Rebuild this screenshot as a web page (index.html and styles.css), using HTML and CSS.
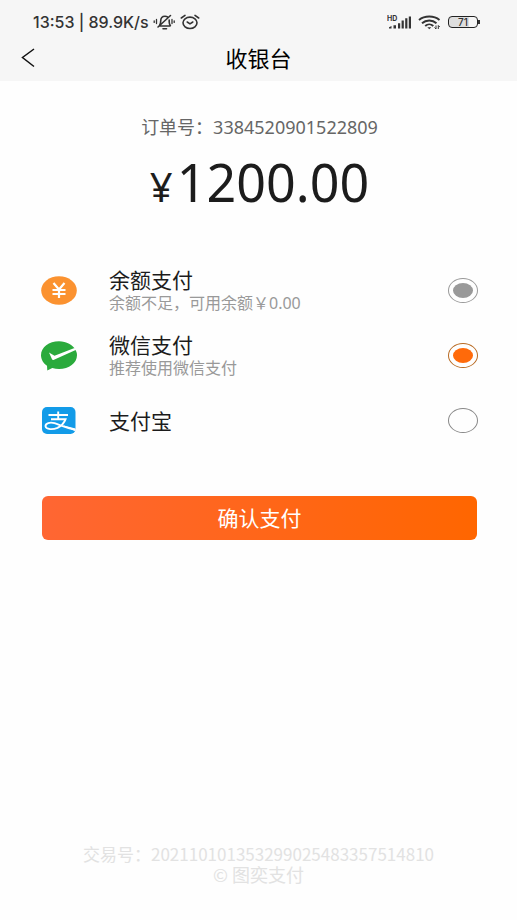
FILE: index.html
```html
<!DOCTYPE html>
<html lang="zh-CN">
<head>
<meta charset="utf-8">
<meta name="viewport" content="width=device-width, initial-scale=1">
<title>收银台</title>
<link rel="stylesheet" href="styles.css">
</head>
<body>
<header class="header">
  <div class="status">
    <span class="status-text">13:53 | 89.9K/s</span>
    <svg class="icon-mute" viewBox="0 0 22 16" width="22" height="16" fill="none" stroke="#333" stroke-width="1.600" stroke-linecap="round">
      <path d="M6 12h11M6.500 11.500c1.200-1.400 1.200-2.500 1.200-4.500C7.700 4 9.500 2.200 12 2.200c1 0 1.800.200 2.500.700M16.200 6v2c0 1.500.400 2.500 1.200 3.700M5 13L17.500 1.500M10 14.700h3.500"/>
      <path d="M3.500 5.500v4M1.200 6.800v1.600M19 5.500v4M21.200 6.800v1.600" stroke-width="1.300"/>
    </svg>
    <svg class="icon-alarm" viewBox="0 0 20 16" width="20" height="16" fill="none" stroke="#333" stroke-width="1.600" stroke-linecap="round">
      <ellipse cx="10" cy="8.800" rx="7" ry="5.700"/>
      <path d="M1.300 4L5 1.400M18.700 4L15 1.400M7.200 8l2.800 1.800L12.800 8"/>
    </svg>
    <svg class="icon-signal" viewBox="0 0 25 15" width="25" height="15">
      <text class="hd" x="0" y="6">HD</text>
      <path d="M2 13.500v-1.300l2.500-1.200v2.500zM6.500 10.300h2.500v3.200H6.500zM11 8.300h2.200v5.200H11zM14.600 5.500h2.200v8h-2.200zM18.200 3.300h2.200v10.200H18.200zM21.800 1.500H24v12h-2.200z" fill="#333"/>
    </svg>
    <svg class="icon-wifi" viewBox="0 0 23 15" width="23" height="15" fill="none" stroke="#333" stroke-width="1.900">
      <path d="M1 5C6.500.300 16 .300 21.500 5M4 8.200c4-3.700 10.500-3.700 14.500 0M7.200 11c2.300-2.200 5.800-2.200 8.100 0"/>
      <path d="M9.300 12.200h4L11.300 14.300z" fill="#333" stroke="none"/>
      <path d="M18 10.500v3.500l-1.500-1.500M20.300 14v-3.500l1.500 1.500" stroke-width="1"/>
    </svg>
    <span class="battery">71</span>
  </div>
  <nav class="nav">
    <a class="back" href="#" aria-label="返回">
      <svg viewBox="0 0 14 20" width="14" height="20" fill="none" stroke="#111" stroke-width="1.500"><path d="M13 1L1.500 9.500 13 18.500"/></svg>
    </a>
    <h1 class="title">收银台</h1>
  </nav>
</header>
<main class="main">
  <p class="order">订单号：3384520901522809</p>
  <p class="amount"><span class="currency">¥</span>1200.00</p>
  <form class="form">
    <label class="method">
      <svg class="logo" viewBox="0 0 36 30" width="36" height="30">
        <ellipse cx="18" cy="14.500" rx="17.800" ry="14.300" fill="#fb9230"/>
        <path d="M12.500 7l5.500 6.500L23.500 7M18 13.500V22M11.500 14h13M11.500 18h13" fill="none" stroke="#fff" stroke-width="2.200"/>
      </svg>
      <span class="info"><span class="name">余额支付</span><span class="note">余额不足，可用余额￥0.00</span></span>
      <input class="radio" type="radio" name="balance" disabled checked>
    </label>
    <label class="method">
      <svg class="logo" viewBox="0 0 36 30" width="36" height="30">
        <path d="M34.500 9C32 3.800 25.500.300 18 .300 8 .300 0 6.300 0 14.200c0 4.300 2.400 8 6 10.500L6.300 29.500l5-2.600c2.200.700 4.400 1.100 6.700 1.100 10 0 18-6 18-13.800 0-2-.500-3.600-1.500-5.200z" fill="#2aaa3c"/>
        <path d="M8 11.500l5.500 3.300L33.500 7l1.700 1.700L13 18.800c-1 .500-1.700.200-2-.600z" fill="#fff"/>
      </svg>
      <span class="info"><span class="name">微信支付</span><span class="note">推荐使用微信支付</span></span>
      <input class="radio" type="radio" name="method" checked>
    </label>
    <label class="method">
      <svg class="logo" viewBox="0 0 36 30" width="36" height="30">
        <rect x="1" y="1" width="33.500" height="27" rx="5" fill="#129be8"/>
        <path d="M7.500 9H27M17.200 5.500v8M10 13.300h14.500c-1.500 4-4.500 6.700-8 8.500-4.500 2-11.500 2-12-1.600-.200-3 4.500-4.400 9-3 5 1.500 10 4 20.800 6.700" fill="none" stroke="#fff" stroke-width="1.900"/>
        <path d="M21 19l13.500 3.500v2.800z" fill="#fff"/>
      </svg>
      <span class="info"><span class="name">支付宝</span></span>
      <input class="radio" type="radio" name="method">
    </label>
    <button class="submit" type="button">确认支付</button>
  </form>
</main>
<footer class="footer">
  <p class="trade">交易号：202110101353299025483357514810</p>
  <p class="copyright">© 图奕支付</p>
</footer>
</body>
</html>
```

FILE: styles.css
```css
* {
  box-sizing: border-box;
}

body {
  display: flex;
  flex-direction: column;
  min-height: 100vh;
  margin: 0;
  background: #fefefe;
  color: #1c1c1c;
  font-family: "Noto Sans", "Noto Sans CJK SC", sans-serif;
}

p,
h1 {
  margin: 0;
}

.header {
  padding: 10px 39px 0 33px;
  background: #f6f6f6;
}

.status {
  display: flex;
  align-items: center;
  height: 24px;
  color: #333;
}

.status-text {
  font: 500 16px/24px Inter, sans-serif;
}

.icon-mute {
  margin-left: 4px;
}

.icon-alarm {
  margin-left: 5px;
}

.icon-signal {
  margin-left: auto;
}

.hd {
  fill: #333;
  font: 700 7px Inter, sans-serif;
}

.icon-wifi {
  margin-left: 6px;
}

.battery {
  position: relative;
  width: 30px;
  height: 12px;
  margin-left: 7px;
  border: 1px solid #222;
  border-radius: 4px;
  background: linear-gradient(90deg, #dedede 70%, #f6f6f6 70%);
  font: 500 10px/10px Inter, sans-serif;
  text-align: center;
}

.battery::after {
  content: "";
  position: absolute;
  top: 3px;
  right: -3px;
  width: 2px;
  height: 4px;
  background: #333;
}

.nav {
  display: grid;
  grid-template-columns: 40px 1fr 40px;
  align-items: center;
  height: 47px;
  margin: 0 -29px 0 -23px;
}

.back {
  display: flex;
  padding-left: 11px;
}

.title {
  color: #000;
  font-size: 22px;
  font-weight: 400;
  line-height: 32px;
  text-align: center;
}

.main {
  padding: 32px 39px 0 41px;
}

.order {
  color: #666;
  font-size: 18px;
  line-height: 28px;
  text-align: center;
}

.amount {
  margin-top: 8px;
  font-size: 52px;
  line-height: 66px;
  text-align: center;
}

.currency {
  margin-right: 4px;
  font-size: 40px;
}

.form {
  display: flex;
  flex-direction: column;
  margin-top: 38px;
}

.method {
  display: flex;
  align-items: center;
  min-height: 65px;
}

.logo {
  flex: none;
}

.info {
  display: flex;
  flex: 1;
  flex-direction: column;
  margin-left: 32px;
}

.name {
  font-size: 21px;
  line-height: 24px;
}

.note {
  color: #999;
  font-size: 16px;
  line-height: 22px;
}

.radio {
  appearance: none;
  display: grid;
  place-items: center;
  flex: none;
  width: 30px;
  height: 25px;
  margin: 0;
  border: 1px solid #888;
  border-radius: 50%;
}

.radio:checked {
  border-color: #b86a22;
}

.radio:checked::before {
  content: "";
  width: 20px;
  height: 15px;
  border-radius: 50%;
  background: #ff6a0a;
}

.radio:disabled {
  border-color: #999;
}

.radio:disabled::before {
  background: #999;
}

.submit {
  height: 44px;
  margin: 43px 1px 0;
  padding: 0;
  border: 0;
  border-radius: 6px;
  background: linear-gradient(90deg, #ff6633, #ff6600);
  color: #fff;
  font-family: inherit;
  font-size: 21px;
  line-height: 36px;
}

.footer {
  margin-top: auto;
  padding: 0 20px 35px;
  color: #e2e2e2;
  font-family: "Noto Sans CJK SC", sans-serif;
  line-height: 21px;
  text-align: center;
}

.trade {
  font-size: 17px;
}

.copyright {
  font-size: 18px;
}
```
